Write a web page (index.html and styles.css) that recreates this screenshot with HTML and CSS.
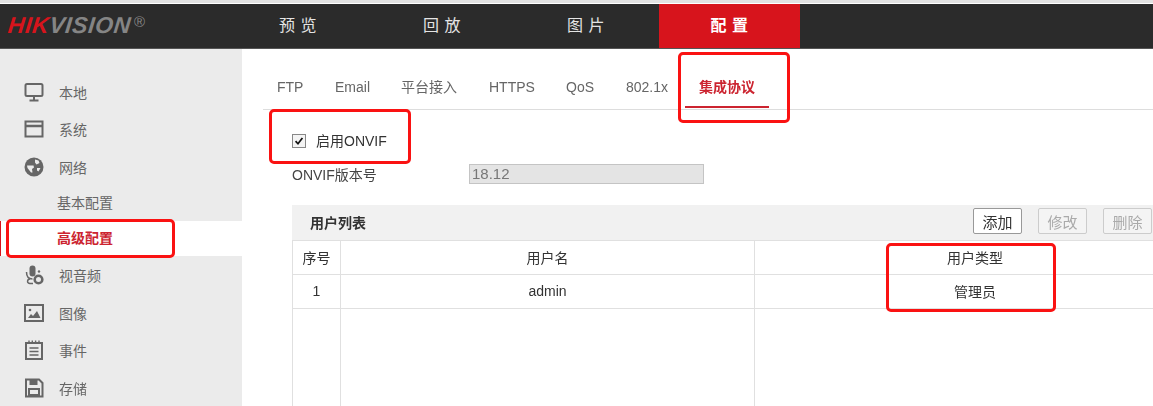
FILE: index.html
```html
<!DOCTYPE html>
<html lang="zh-CN">
<head>
<meta charset="utf-8">
<title>配置</title>
<link rel="stylesheet" href="styles.css">
</head>
<body>
<div class="page">
  <header class="topbar">
    <div class="logo"><span class="logo-text"><span class="logo-red">HIK</span><span class="logo-gray">VISION</span></span><span class="logo-reg">®</span></div>
    <nav class="mainnav">
      <a class="nav-item">预 览</a>
      <a class="nav-item">回 放</a>
      <a class="nav-item nav-narrow">图 片</a>
      <a class="nav-item nav-active">配 置</a>
    </nav>
  </header>
  <div class="body">
    <aside class="sidebar">
      <div class="side-row"><svg class="ico" viewBox="0 0 20 20"><rect x="1.5" y="2" width="17" height="12" rx="1.5" fill="none" stroke="#666" stroke-width="2"/><path d="M10 14v4M5.5 18.5h9" stroke="#666" stroke-width="2" fill="none"/></svg><span>本地</span></div>
      <div class="side-row"><svg class="ico" viewBox="0 0 20 20"><rect x="1.5" y="2.5" width="17" height="15" fill="none" stroke="#666" stroke-width="2"/><path d="M2 7h16" stroke="#666" stroke-width="2.5"/></svg><span>系统</span></div>
      <div class="side-row"><svg class="ico" viewBox="0 0 20 20"><circle cx="10" cy="10" r="9.500" fill="#666"/><path d="M3 8.500h6.500l.5 2-2 1.500.5 3.500-1.500 0-3.500-4.500zM11 2.500l3.500 1 1 2.500-3 1.500-1.500-2zM13 11h3.500l-2 3.500-1.500-1z" fill="#ebebeb"/></svg><span>网络</span></div>
      <div class="side-sub">基本配置</div>
      <div class="side-sub side-active">高级配置</div>
      <div class="side-row"><svg class="ico" viewBox="0 0 20 20"><rect x="5.500" y="0.500" width="6" height="11" rx="3" fill="#666"/><path d="M2.500 7c0 5 2.500 7 6 7M6 14c-3 0-3.500 4.500 0 4.500h3" fill="none" stroke="#666" stroke-width="1.500"/><circle cx="14.500" cy="14.500" r="3.800" fill="none" stroke="#666" stroke-width="2.600"/><circle cx="15" cy="6.500" r="1.200" fill="#666"/></svg><span>视音频</span></div>
      <div class="side-row"><svg class="ico" viewBox="0 0 20 20"><rect x="1" y="2" width="18" height="16" fill="none" stroke="#666" stroke-width="2"/><circle cx="6" cy="7" r="1.300" fill="#666"/><path d="M4 15l3-4 2 2 4-5 3.500 7z" fill="#666"/></svg><span>图像</span></div>
      <div class="side-row"><svg class="ico" viewBox="0 0 20 20"><rect x="2" y="3" width="16" height="16" fill="none" stroke="#666" stroke-width="2"/><path d="M5 0.500v3M8.300 0.500v3M11.600 0.500v3M15 0.500v3M5.500 8h9M5.500 11.500h9M5.500 15h9" stroke="#666" stroke-width="1.400"/></svg><span>事件</span></div>
      <div class="side-row"><svg class="ico" viewBox="0 0 20 20"><path d="M2 1.500h13l3.500 3.500v13.500h-16.500z" fill="none" stroke="#666" stroke-width="2"/><rect x="5.500" y="2" width="8" height="5" fill="#666"/><rect x="5" y="11" width="10" height="6" fill="none" stroke="#666" stroke-width="2"/></svg><span>存储</span></div>
    </aside>
    <main class="content">
      <div class="tabs">
        <a class="tab tab-ftp">FTP</a>
        <a class="tab tab-email">Email</a>
        <a class="tab tab-plat">平台接入</a>
        <a class="tab tab-https">HTTPS</a>
        <a class="tab tab-qos">QoS</a>
        <a class="tab tab-dot">802.1x</a>
        <a class="tab tab-active">集成协议</a>
      </div>
      <div class="form">
        <label class="check-row"><span class="checkbox"><svg viewBox="0 0 14 14"><path d="M3 7.200l2.800 3L11 3.500" fill="none" stroke="#111" stroke-width="2"/></svg></span><span>启用ONVIF</span></label>
        <div class="field-row"><span class="field-label">ONVIF版本号</span><div class="field-input">18.12</div></div>
      </div>
      <section class="panel">
        <div class="panel-head">
          <h2 class="panel-title">用户列表</h2>
          <div class="panel-actions">
            <button class="btn">添加</button>
            <button class="btn btn-off">修改</button>
            <button class="btn btn-off">删除</button>
          </div>
        </div>
        <div class="grid">
          <div class="cell">序号</div><div class="cell">用户名</div><div class="cell">用户类型</div>
          <div class="cell">1</div><div class="cell">admin</div><div class="cell">管理员</div>
          <div class="cell cell-empty"></div><div class="cell cell-empty"></div><div class="cell cell-empty"></div>
        </div>
      </section>
    </main>
  </div>
  <div class="mark mark-side"></div>
  <div class="mark mark-check"></div>
  <div class="mark mark-tab"></div>
  <div class="mark mark-type"></div>
</div>
</body>
</html>
```
FILE: styles.css
```css
* { box-sizing: border-box; }
html, body { margin: 0; padding: 0; background: #fff; }
body { font-family: "Liberation Sans", "Noto Sans CJK SC", sans-serif; font-size: 14px; color: #333; }
.page { position: relative; width: 1153px; height: 406px; overflow: hidden; display: flex; flex-direction: column; border-top: 3px solid #e2e2e2; padding-top: 1px; filter: blur(0.35px); }
.topbar { display: flex; height: 45px; background: #2b2b2b; flex: none; border-bottom: 1px solid #555; }
.logo { width: 279px; padding: 8px 0 0 8px; font-size: 23px; font-weight: bold; line-height: 27px; white-space: nowrap; display: flex; align-items: flex-start; }
.logo-text { display: inline-block; font-style: italic; letter-spacing: 0.600px; transform: skewX(-6deg); }
.logo-red { color: #d7141c; }
.logo-gray { color: #858585; }
.logo-reg { color: #858585; font-size: 15px; font-weight: normal; line-height: 20px; margin-left: 3px; }
.mainnav { display: flex; align-items: stretch; }
.nav-item { width: 144px; line-height: 44px; font-size: 16px; color: #e4e4e4; letter-spacing: 0.500px; white-space: nowrap; }
.nav-narrow { width: 92px; }
.nav-active { width: 141px; background: #d7141c; color: #fff; font-weight: bold; text-align: center; }
.body { flex: 1; display: flex; min-height: 0; }
.sidebar { width: 242px; flex: none; background: #ebebeb; padding-top: 24px; }
.side-row { display: flex; align-items: center; height: 37.500px; padding-left: 24px; gap: 15px; color: #666; font-size: 14px; }
.ico { width: 20px; height: 20px; flex: none; }
.side-sub { height: 35px; line-height: 35px; padding-left: 57px; color: #666; font-size: 14px; }
.side-active { background: #fff; color: #cc2430; font-weight: bold; margin-bottom: 1px; box-shadow: inset 1px 0 0 #d7141c; }
.content { flex: 1; padding-left: 21px; min-width: 0; }
.tabs { display: flex; height: 61px; border-bottom: 1px solid #ddd; padding-left: 14px; }
.tab { padding-top: 29px; color: #666; font-size: 14px; white-space: nowrap; line-height: 18px; }
.tab-ftp { width: 58px; }
.tab-email { width: 66px; }
.tab-plat { width: 88px; }
.tab-https { width: 77px; }
.tab-qos { width: 60px; }
.tab-dot { width: 59px; }
.tab-active { width: 84px; padding-left: 14px; height: 59px; color: #cc2430; font-weight: bold; border-bottom: 2px solid #cc2430; }
.form { padding-left: 29px; height: 75px; }
.check-row { display: flex; align-items: center; gap: 10px; height: 20px; margin-top: 20px; }
.checkbox { width: 14px; height: 14px; margin-top: 2px; background: #f4f4f4; border: 1px solid #888; display: block; flex: none; }
.checkbox svg { display: block; width: 12px; height: 12px; }
.field-row { display: flex; align-items: center; margin-top: 13px; height: 21px; }
.field-label { width: 177px; color: #444; }
.field-input { width: 235px; height: 20px; background: #e4e4e4; border: 1px solid #c4c4c4; color: #777; padding-left: 2px; line-height: 18px; font-size: 15px; }
.panel { margin-left: 29px; }
.panel-head { display: flex; align-items: flex-start; justify-content: space-between; height: 36px; background: #f1f1f1; border-bottom: 1px solid #e0e0e0; padding: 3px 1px 0 18px; }
.panel-title { margin: 0; padding-top: 5px; font-size: 14px; line-height: 20px; font-weight: bold; color: #333; }
.panel-actions { display: flex; gap: 16px; }
.btn { width: 49px; height: 26px; padding: 0; background: #fff; border: 1px solid #999; border-radius: 2px; font: inherit; font-size: 15px; color: #333; }
.btn-off { color: #aaa; border-color: #ccc; background: #f4f4f4; }
.grid { display: grid; grid-template-columns: 48px 414px 440px; grid-template-rows: 34px 34px 120px; border-left: 1px solid #e0e0e0; }
.cell { display: flex; align-items: center; justify-content: center; padding-bottom: 2px; border-right: 1px solid #e0e0e0; border-bottom: 1px solid #e0e0e0; color: #333; }
.cell:nth-child(3n) { border-right: none; }
.cell-empty { border-bottom: none; }
.mark { position: absolute; border: 3px solid #fa1212; border-radius: 5px; }
.mark-side { left: 6px; top: 216px; width: 169px; height: 39px; }
.mark-check { left: 269px; top: 106px; width: 142px; height: 55px; }
.mark-tab { left: 678px; top: 49px; width: 112px; height: 71px; }
.mark-type { left: 886px; top: 240px; width: 170px; height: 69px; }
```
